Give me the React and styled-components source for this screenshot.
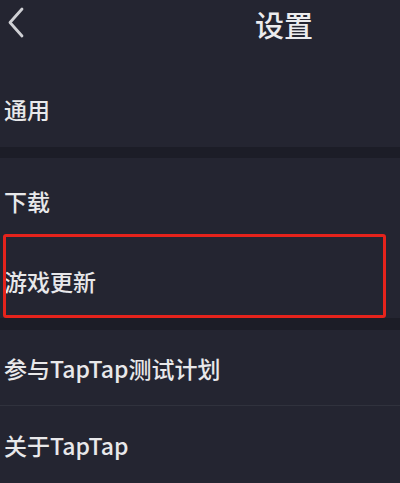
import React from 'react';
import styled, { createGlobalStyle } from 'styled-components';

const GlobalStyle = createGlobalStyle`
  html, body {
    margin: 0;
    padding: 0;
    background: #242531;
  }
  body {
    font-family: "Noto Sans CJK SC", "Noto Sans", sans-serif;
    color: #e8e8ea;
  }
`;

const Screen = styled.div`
  width: 400px;
  height: 483px;
  overflow: hidden;
  background: #242531;
  display: flex;
  flex-direction: column;
`;

const Header = styled.header`
  height: 70px;
  display: flex;
  align-items: flex-start;
  padding: 7px 0 0 7px;
  box-sizing: border-box;
`;

const BackButton = styled.button`
  border: 0;
  background: none;
  padding: 0;
  width: 18px;
  height: 31px;
  color: #cfd0d4;
  cursor: pointer;
  svg {
    display: block;
  }
`;

const Title = styled.h1`
  margin: 0 0 0 230px;
  font-size: 29px;
  line-height: 34px;
  font-weight: 500;
  color: #ececee;
  letter-spacing: 0;
`;

const Row = styled.div`
  position: relative;
  height: ${(p) => p.h}px;
  padding: ${(p) => p.pt || 0}px 0 0 4px;
  box-sizing: border-box;
  display: flex;
  align-items: center;
  font-size: 23px;
  font-weight: 500;
  color: #e8e8ea;
  border-bottom: ${(p) => (p.line ? '1px solid #30323d' : 'none')};
`;

const Gap = styled.div`
  height: ${(p) => p.h}px;
  background: #1c1d27;
`;

const Highlight = styled.div`
  position: absolute;
  left: 3px;
  right: 14px;
  top: -10px;
  bottom: 0;
  border: 3px solid #e5231c;
  border-radius: 3px;
  pointer-events: none;
`;

const App = () => (
  <>
    <GlobalStyle />
    <Screen>
      <Header>
        <BackButton aria-label="返回">
          <svg width="18" height="31" viewBox="0 0 18 31">
            <polyline
              points="15,2 3,15.5 15,29"
              fill="none"
              stroke="currentColor"
              strokeWidth="2.8"
              strokeLinecap="round"
              strokeLinejoin="round"
            />
          </svg>
        </BackButton>
        <Title>设置</Title>
      </Header>
      <Row h={77}>通用</Row>
      <Gap h={11} />
      <Row h={86}>下载</Row>
      <Row h={74} pt={0}>
        游戏更新
        <Highlight />
      </Row>
      <Gap h={12} />
      <Row h={76} line>参与TapTap测试计划</Row>
      <Row h={77}>关于TapTap</Row>
    </Screen>
  </>
);

export default App;
